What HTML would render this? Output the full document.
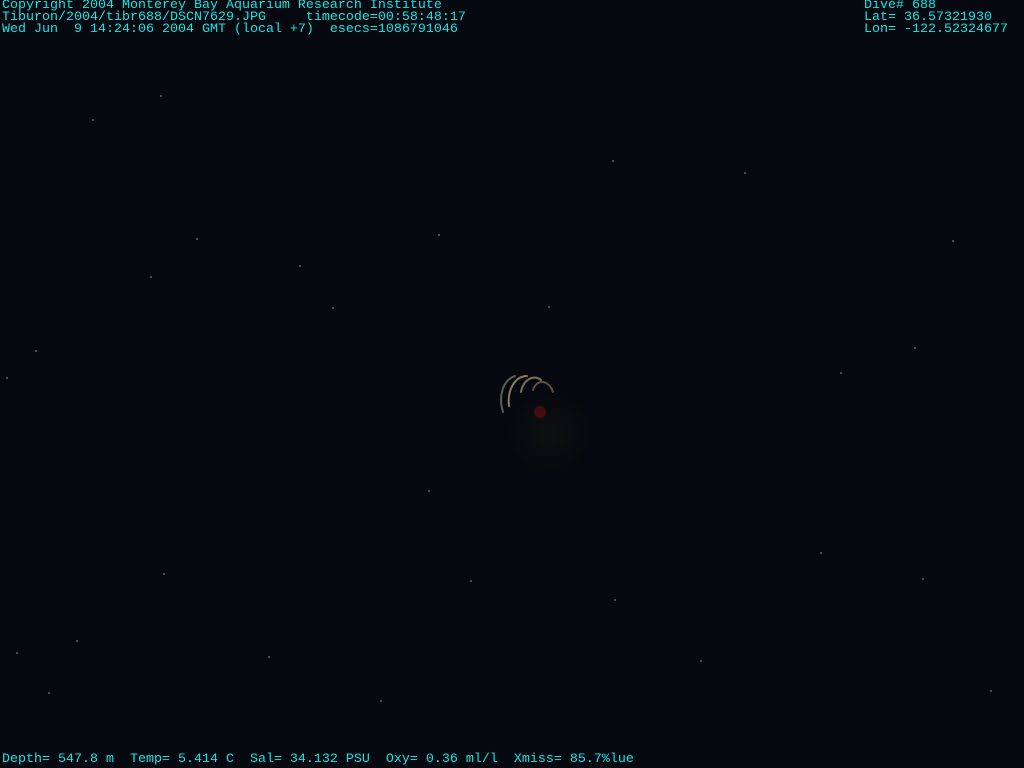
<!DOCTYPE html>
<html><head><meta charset="utf-8"><style>
html,body{margin:0;padding:0}
body{width:1024px;height:768px;overflow:hidden;background:#05080e;position:relative;font-family:"Liberation Mono",monospace;font-size:13.33px;color:#10e8e8}
.t{position:absolute;white-space:pre;line-height:12px}
.d{position:absolute;width:2px;height:2px;background:#5a6470;border-radius:1px}
</style></head><body>
<div class="t" style="left:2px;top:0px">Copyright 2004 Monterey Bay Aquarium Research Institute
Tiburon/2004/tibr688/DSCN7629.JPG     timecode=00:58:48:17
Wed Jun  9 14:24:06 2004 GMT (local +7)  esecs=1086791046</div>
<div class="t" style="left:864px;top:0px">Dive# 688
Lat= 36.57321930
Lon= -122.52324677</div>
<div class="t" style="left:2px;top:754px">Depth= 547.8 m  Temp= 5.414 C  Sal= 34.132 PSU  Oxy= 0.36 ml/l  Xmiss= 85.7%lue</div>
<div style="position:absolute;left:505px;top:390px;width:90px;height:85px;border-radius:50%;background:radial-gradient(circle,#0e1010 0%,rgba(8,10,12,0) 70%)"></div>
<svg style="position:absolute;left:495px;top:368px" width="70" height="60">
<g fill="none" stroke-width="2" stroke-linecap="round">
<path d="M8 44 C3 28 8 12 20 8" stroke="#5e5e52"/>
<path d="M14 38 C12 22 20 8 32 8" stroke="#8a7a62"/>
<path d="M26 24 C28 12 38 6 46 12" stroke="#7a6e5a"/>
<path d="M38 22 C42 10 54 12 58 24" stroke="#5a5044"/>
</g>
<circle cx="45" cy="44" r="6" fill="#5a1010" opacity=".7"/>
</svg>
<div class="d" style="left:92px;top:119px"></div><div class="d" style="left:160px;top:95px"></div>
<div class="d" style="left:438px;top:234px;background:#4a7a50"></div><div class="d" style="left:299px;top:265px"></div>
<div class="d" style="left:150px;top:276px"></div><div class="d" style="left:6px;top:377px"></div>
<div class="d" style="left:35px;top:350px"></div><div class="d" style="left:332px;top:307px"></div>
<div class="d" style="left:612px;top:160px"></div><div class="d" style="left:744px;top:172px"></div>
<div class="d" style="left:914px;top:347px"></div><div class="d" style="left:163px;top:573px"></div>
<div class="d" style="left:614px;top:599px"></div><div class="d" style="left:16px;top:652px"></div>
<div class="d" style="left:76px;top:640px"></div><div class="d" style="left:268px;top:656px"></div>
<div class="d" style="left:820px;top:552px"></div><div class="d" style="left:922px;top:578px"></div>
<div class="d" style="left:196px;top:238px"></div><div class="d" style="left:548px;top:306px"></div>
<div class="d" style="left:428px;top:490px"></div><div class="d" style="left:840px;top:372px"></div>
<div class="d" style="left:952px;top:240px"></div><div class="d" style="left:470px;top:580px"></div>
<div class="d" style="left:700px;top:660px"></div><div class="d" style="left:380px;top:700px"></div>
<div class="d" style="left:48px;top:692px"></div><div class="d" style="left:990px;top:690px"></div>
</body></html>
